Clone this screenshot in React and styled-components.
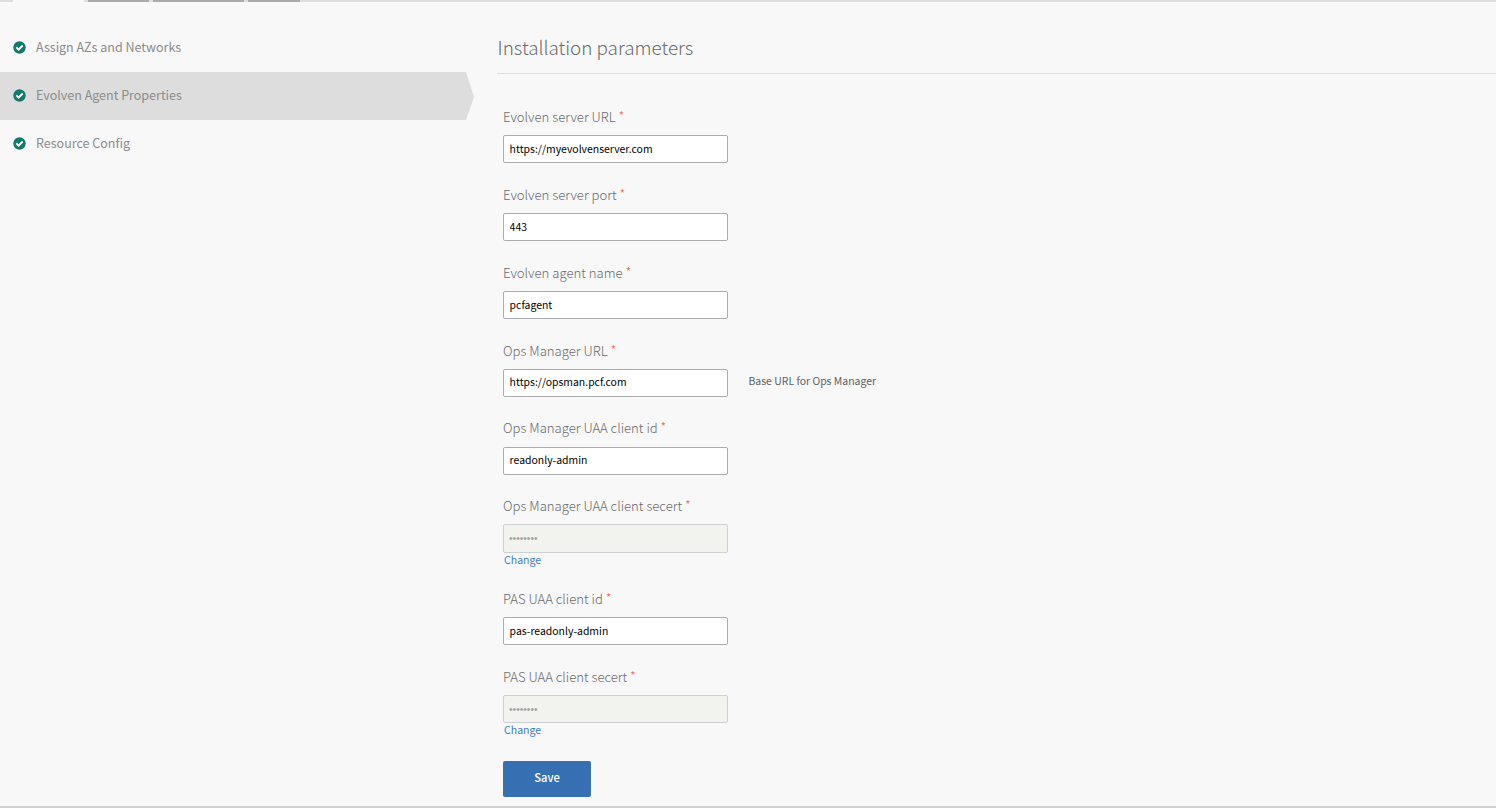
import React from 'react';
import styled, { createGlobalStyle, css } from 'styled-components';

const GlobalStyle = createGlobalStyle`
  * { box-sizing: border-box; }
  body {
    margin: 0;
    background: #f8f8f8;
    font-family: "Noto Sans CJK SC", "Open Sans", sans-serif;
  }
`;

const Page = styled.div`
  height: 808px;
  display: flex;
  flex-direction: column;
  overflow: hidden;
  border-bottom: 2px solid #cfcfcf;
`;

const TabStrip = styled.div`
  display: flex;
  flex: none;
  gap: 4px;
  height: 2px;
  padding-left: 13px;
  background: #dedede;
`;

const Tab = styled.div`
  width: ${(p) => p.$width}px;
  background: ${(p) => (p.$active ? '#f8f8f8' : '#ababab')};
`;

const Body = styled.div`
  display: flex;
  flex: 1;
`;

const Sidebar = styled.nav`
  width: 474px;
  flex: none;
  padding-top: 22px;
`;

const NavItem = styled.a`
  display: flex;
  align-items: center;
  gap: 10px;
  height: 48px;
  padding: 0 0 1px 13px;
  color: #8c8c8c;
  font-size: 12.5px;
  white-space: nowrap;
  ${(p) => p.$active && css`
    background: #dddddd;
    clip-path: polygon(0 0, 466px 0, 474px 25px, 466px 100%, 0 100%);
  `}
`;

const NavText = styled.span`
  padding-bottom: 3px;
`;

const Main = styled.main`
  flex: 1;
  padding: 22px 0 0 23px;
`;

const Title = styled.h1`
  margin: 0;
  height: 50px;
  padding-left: 0.6px;
  border-bottom: 1px solid #dddddd;
  color: #696b6d;
  font-size: 18.85px;
  font-weight: 300;
  line-height: 46px;
`;

const Form = styled.form`
  padding: 32.891px 0 0 6px;
`;

const Field = styled.div`
  padding-bottom: 21.563px;
`;

const Label = styled.label`
  display: block;
  height: 28.141px;
  color: #696b6d;
  font-size: 13.13px;
  font-weight: 300;
  line-height: 20px;
  white-space: nowrap;
`;

const Required = styled.span`
  color: #f4604c;
  line-height: 1;
  vertical-align: 1px;
`;

const InputRow = styled.div`
  display: flex;
  align-items: center;
  gap: 20.5px;
`;

const Input = styled.input`
  width: 225px;
  height: 28.188px;
  padding: 0 5.6px 1.72px;
  border: 1px solid #a9adb0;
  border-radius: 2px;
  background: #ffffff;
  color: #000000;
  font-family: inherit;
  font-size: 10.45px;
  outline: none;
  &:disabled {
    border-color: #ced1d1;
    background: #f2f2ee;
    color: #a4a4a4;
    font-family: "Liberation Sans", sans-serif;
    font-size: 10.2px;
    padding: 0 5px;
  }
`;

const Help = styled.span`
  color: #5d6063;
  font-size: 10.45px;
  line-height: 16px;
  padding-bottom: 4px;
`;

const ChangeLink = styled.a`
  display: block;
  height: 15.85px;
  margin-top: -0.95px;
  padding-left: 1px;
  color: #3b7fc0;
  font-size: 10.55px;
  line-height: 15px;
`;

const SaveButton = styled.button`
  display: block;
  width: 88px;
  height: 36px;
  margin-top: 1px;
  padding: 0 0 3px;
  border: 0;
  border-radius: 2px;
  background: #3670b2;
  color: #ffffff;
  font-family: inherit;
  font-size: 11.2px;
  font-weight: 500;
`;

const CheckIcon = () => (
  <svg width="13" height="13" viewBox="0 0 13 13" aria-hidden="true">
    <circle cx="6.5" cy="6.5" r="6.2" fill="#13796b" />
    <path d="M3.3 6.4 5.6 8.6 9.7 4.5" fill="none" stroke="#fff" strokeWidth="1.9" />
  </svg>
);

const tabs = [{ width: 71, active: true }, { width: 61 }, { width: 91 }, { width: 52 }];

const sections = [
  { name: 'Assign AZs and Networks' },
  { name: 'Evolven Agent Properties', active: true },
  { name: 'Resource Config' },
];

const fields = [
  { label: 'Evolven server URL', value: 'https://myevolvenserver.com' },
  { label: 'Evolven server port', value: '443' },
  { label: 'Evolven agent name', value: 'pcfagent' },
  { label: 'Ops Manager URL', value: 'https://opsman.pcf.com', help: 'Base URL for Ops Manager' },
  { label: 'Ops Manager UAA client id', value: 'readonly-admin' },
  { label: 'Ops Manager UAA client secert', value: '••••••••', secret: true },
  { label: 'PAS UAA client id', value: 'pas-readonly-admin' },
  { label: 'PAS UAA client secert', value: '••••••••', secret: true },
];

export default function App() {
  return (
    <Page>
      <GlobalStyle />
      <TabStrip>
        {tabs.map((t, i) => <Tab key={i} $width={t.width} $active={t.active} />)}
      </TabStrip>
      <Body>
        <Sidebar>
          {sections.map((s) => (
            <NavItem key={s.name} $active={s.active}>
              <CheckIcon />
              <NavText>{s.name}</NavText>
            </NavItem>
          ))}
        </Sidebar>
        <Main>
          <Title>Installation parameters</Title>
          <Form>
            {fields.map((f) => (
              <Field key={f.label}>
                <Label>{f.label} <Required>*</Required></Label>
                <InputRow>
                  <Input defaultValue={f.value} disabled={f.secret} />
                  {f.help && <Help>{f.help}</Help>}
                </InputRow>
                {f.secret && <ChangeLink>Change</ChangeLink>}
              </Field>
            ))}
            <SaveButton type="button">Save</SaveButton>
          </Form>
        </Main>
      </Body>
    </Page>
  );
}
